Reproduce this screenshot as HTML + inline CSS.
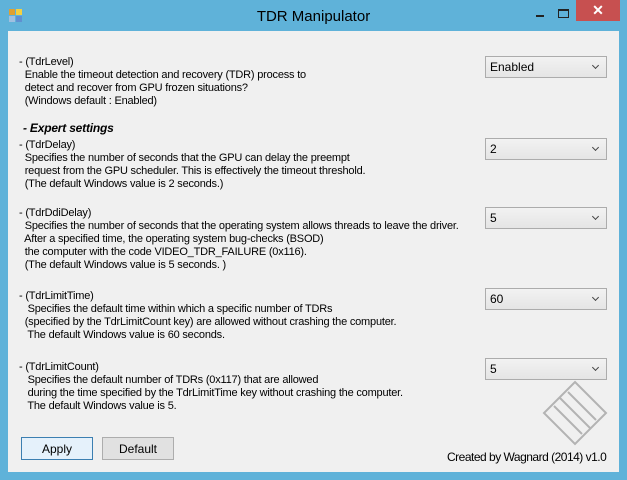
<html><head><style>
body{margin:0;width:627px;height:480px;background:#5fb2d9;font-family:"Liberation Sans",sans-serif;position:relative;overflow:hidden}
.client{position:absolute;left:8px;top:31px;width:611px;height:441px;background:#f0f0f0}
.t{position:absolute;font-size:11px;line-height:13px;color:#000;white-space:pre;letter-spacing:-0.2px}
.dd{position:absolute;left:485px;border:1px solid #acacac;background:linear-gradient(#f2f2f2,#e5e5e5);font-size:12px;line-height:20px;padding-left:4px;box-sizing:border-box;width:122px;height:22px}
.dd:after{content:"";position:absolute;right:8px;top:6px;width:4px;height:4px;border-right:1.5px solid #444;border-bottom:1.5px solid #444;transform:rotate(45deg)}
.btn{position:absolute;top:437px;height:23px;width:72px;border:1px solid #adadad;background:#e1e1e1;font-size:12px;line-height:22px;text-align:center;box-sizing:border-box}
</style></head><body>
<div style="position:absolute;left:9px;top:9px;width:6px;height:6px;background:#e0a030"></div>
<div style="position:absolute;left:16px;top:9px;width:6px;height:6px;background:#f4d040"></div>
<div style="position:absolute;left:9px;top:16px;width:6px;height:6px;background:#a0c0e0"></div>
<div style="position:absolute;left:16px;top:16px;width:6px;height:6px;background:#6090d0"></div>
<div style="position:absolute;left:0;top:8px;width:627px;text-align:center;font-size:15px;color:#000">TDR Manipulator</div>
<div style="position:absolute;left:536px;top:15px;width:8px;height:2px;background:#222"></div>
<div style="position:absolute;left:558px;top:9px;width:9px;height:6px;border:1px solid #222;border-top-width:2px"></div>
<div style="position:absolute;left:576px;top:0;width:44px;height:21px;background:#c75050;color:#fff;text-align:center;font-size:14px;line-height:20px;font-weight:bold">✕</div>
<div class="client"></div>
<div class="t" style="left:19px;top:56px">- (TdrLevel)
  Enable the timeout detection and recovery (TDR) process to
  detect and recover from GPU frozen situations?
  (Windows default : Enabled)</div>
<div class="t" style="left:23px;top:122px;font-weight:bold;font-style:italic;font-size:12px">- Expert settings</div>
<div class="t" style="left:19px;top:139px">- (TdrDelay)
  Specifies the number of seconds that the GPU can delay the preempt
  request from the GPU scheduler. This is effectively the timeout threshold.
  (The default Windows value is 2 seconds.)</div>
<div class="t" style="left:19px;top:207px">- (TdrDdiDelay)
  Specifies the number of seconds that the operating system allows threads to leave the driver.
  After a specified time, the operating system bug-checks (BSOD)
  the computer with the code VIDEO_TDR_FAILURE (0x116).
  (The default Windows value is 5 seconds. )</div>
<div class="t" style="left:19px;top:290px">- (TdrLimitTime)
   Specifies the default time within which a specific number of TDRs
  (specified by the TdrLimitCount key) are allowed without crashing the computer.
   The default Windows value is 60 seconds.</div>
<div class="t" style="left:19px;top:361px">- (TdrLimitCount)
   Specifies the default number of TDRs (0x117) that are allowed
   during the time specified by the TdrLimitTime key without crashing the computer.
   The default Windows value is 5.</div>
<div class="dd" style="top:56px">Enabled</div>
<div class="dd" style="top:138px">2</div>
<div class="dd" style="top:207px">5</div>
<div class="dd" style="top:288px">60</div>
<div class="dd" style="top:358px">5</div>
<div class="btn" style="left:21px;background:#e5f1fb;border-color:#3c7fb1">Apply</div>
<div class="btn" style="left:102px">Default</div>
<div class="t" style="left:447px;top:451px;font-size:12px;letter-spacing:-0.5px">Created by Wagnard (2014) v1.0</div>
<svg style="position:absolute;left:540px;top:378px" width="70" height="70"><g fill="none" stroke="#999" stroke-width="2" opacity=".7"><path d="M35 4 L66 35 L35 66 L4 35 Z M20 20 L50 50 M28 14 L56 42 M14 28 L42 56"/></g></svg>
</body></html>
